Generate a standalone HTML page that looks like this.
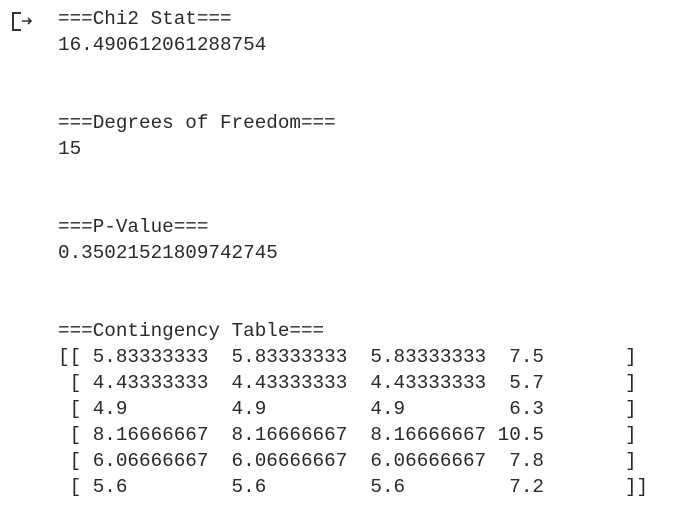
<!DOCTYPE html>
<html><head><style>
body{margin:0;background:#fff;width:682px;height:512px;overflow:hidden;position:relative}
pre{position:absolute;left:58px;top:6px;margin:0;font-family:"Liberation Mono",monospace;font-size:19.3px;line-height:26px;color:#2a2a2a;letter-spacing:0}
svg{position:absolute;left:0;top:0}
</style></head><body>
<svg width="40" height="40"><path d="M21 13H13V30H21" fill="none" stroke="#333" stroke-width="2"/><path d="M22 21H31M28 18L31 21L28 24" fill="none" stroke="#333" stroke-width="1.6"/></svg>
<pre>===Chi2 Stat===
16.490612061288754


===Degrees of Freedom===
15


===P-Value===
0.35021521809742745


===Contingency Table===
[[ 5.83333333  5.83333333  5.83333333  7.5       ]
 [ 4.43333333  4.43333333  4.43333333  5.7       ]
 [ 4.9         4.9         4.9         6.3       ]
 [ 8.16666667  8.16666667  8.16666667 10.5       ]
 [ 6.06666667  6.06666667  6.06666667  7.8       ]
 [ 5.6         5.6         5.6         7.2       ]]</pre>
</body></html>
